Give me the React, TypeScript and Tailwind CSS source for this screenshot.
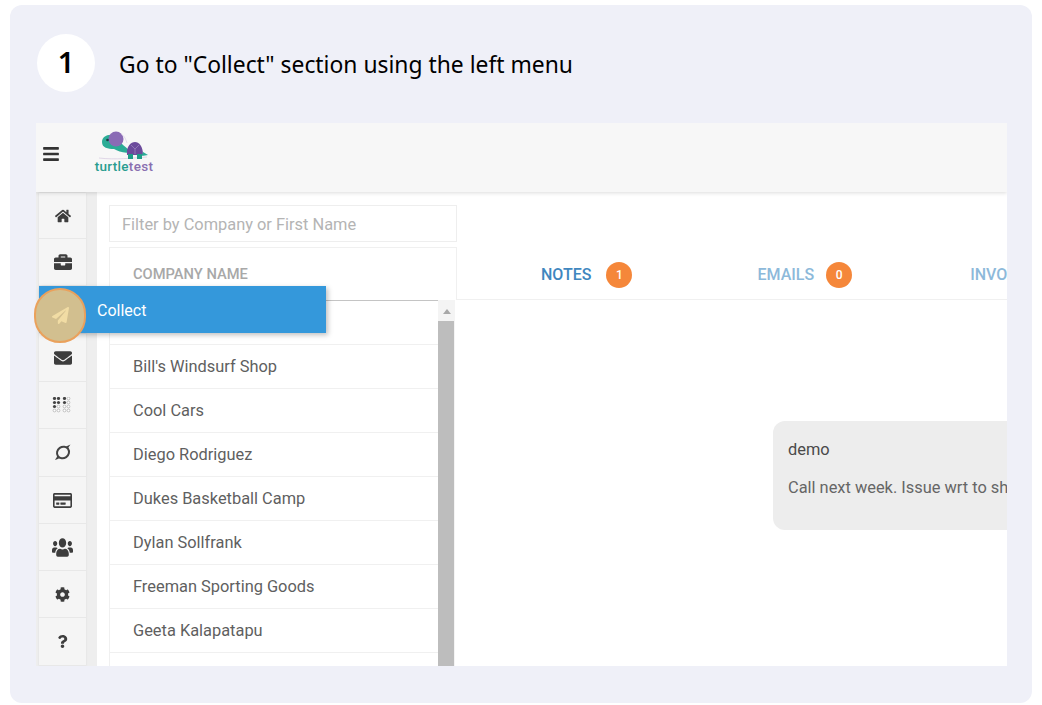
import { FaBars, FaBriefcase, FaCog, FaEnvelope, FaHome, FaPaperPlane, FaQuestion, FaRegCreditCard, FaUsers } from "react-icons/fa";

function DotsIcon() {
  const dark = [[0, 0], [4, 0], [0, 4], [4, 4], [0, 8], [10, 0], [10, 4]];
  const light = [[4, 8], [0, 12], [4, 12], [14, 0], [14, 4], [10, 8], [14, 8], [10, 12], [14, 12]];
  return (
    <svg width="21" height="16" viewBox="-1.5 -1.5 19 16">
      {dark.map(([x, y]) => <circle key={`${x}-${y}`} cx={x} cy={y} r="1.6" fill="#444" />)}
      {light.map(([x, y]) => <circle key={`${x}-${y}`} cx={x} cy={y} r="1.4" fill="#fff" stroke="#aaa" strokeWidth="0.7" />)}
    </svg>
  );
}

function OrbitIcon() {
  return (
    <svg width="19" height="19" viewBox="0 0 19 19" fill="none">
      <ellipse cx="10" cy="9.5" rx="6.2" ry="5.6" stroke="#444" strokeWidth="2" transform="rotate(-35 10 9.5)" />
      <path d="M2 17 C3 15 4 14 4.6 12.4 L6.6 15 C5 16 3.5 16.6 2 17Z M17.5 1.5 C16.5 3 15.6 4 15 5.6 L13 3.6 C14.5 2.8 16 2 17.5 1.5Z" fill="#444" />
    </svg>
  );
}

function TurtleLogo() {
  return (
    <svg width="58" height="29" viewBox="0 0 58 29">
      <path d="M4 27 C20 29 38 27 52 26" stroke="#d5c8e0" strokeWidth="0.7" fill="none" />
      <path d="M7 11 C7 6 12 3 18 4 C23 6 25 11 28 14 C31 16 34 19 35 21 C30 23 23 20 19 18 C13 18 7 17 7 11Z" fill="#2bac96" />
      <circle cx="21" cy="8" r="7.5" fill="#8a6bb5" />
      <circle cx="12.5" cy="9" r="1.3" fill="#1e3a40" />
      <path d="M32 24 C31 15 36 11 40 11 C44 11 48 15 48 24Z" fill="#6c4b9c" />
      <path d="M36 14 L40 18 L44 14 M40 18 V23" stroke="#a08ac2" strokeWidth="0.7" fill="none" />
      <rect x="33" y="23" width="5" height="5" fill="#1f9c88" />
      <rect x="42" y="23" width="5" height="5" fill="#1f9c88" />
      <path d="M48 21 L53 24 L47 25Z" fill="#2bac96" />
      <path d="M26 3 C30 5 31 9 32 12" stroke="#d5c8e0" strokeWidth="0.6" fill="none" />
    </svg>
  );
}

const sideItems = [
  { icon: <FaHome size={16} />, h: "h-[46px]" },
  { icon: <FaBriefcase size={18} />, h: "h-[47px]" },
  { icon: null, h: "h-[48px]" },
  { icon: <FaEnvelope size={18} />, h: "h-[48px]" },
  { icon: <DotsIcon />, h: "h-[47px]" },
  { icon: <OrbitIcon />, h: "h-[48px]" },
  { icon: <FaRegCreditCard size={19} />, h: "h-[47px]" },
  { icon: <FaUsers size={21} className="scale-y-125" />, h: "h-[47px]" },
  { icon: <FaCog size={15} />, h: "h-[47px]" },
  { icon: <FaQuestion size={13} />, h: "h-[48px]" },
];

const rows = ["", "Bill's Windsurf Shop", "Cool Cars", "Diego Rodriguez", "Dukes Basketball Camp", "Dylan Sollfrank", "Freeman Sporting Goods", "Geeta Kalapatapu", "Harry's Hardware"];

export default function App() {
  return (
    <div className="h-[705px] w-[1042px] overflow-hidden bg-white px-[10px] pt-[5px]">
      <div className="h-[698px] w-[1022px] rounded-[12px] bg-[#eff0f8] pl-[26px] pt-[29px] [font-family:'Noto_Sans',sans-serif]">
        <div className="flex h-[58px] items-center">
          <div className="ml-px flex h-[58px] w-[58px] items-center justify-center rounded-full bg-white pb-[2px] text-[29px] font-semibold text-black">1</div>
          <div className="ml-[24px] pt-[4px] text-[22.85px] text-black">Go to "Collect" section using the left menu</div>
        </div>
        <div className="relative mt-[31px] h-[543px] w-[971px] [font-family:Roboto,sans-serif]">
          <div className="h-[543px] w-[971px] overflow-hidden bg-[#eeeeee]">
            <div className="relative flex h-[69px] items-start bg-[#f7f7f7] shadow-[0_1px_4px_rgba(0,0,0,0.14)]">
              <FaBars size={18} className="ml-[6px] mt-[22px] text-[#333]" />
              <div className="ml-[34px] flex w-[60px] flex-col items-center pt-[8px]">
                <TurtleLogo />
                <div className="mt-[-1px] text-[13.5px] font-medium leading-[14px] tracking-[0.3px] text-[#2a9d8f]">turtle<span className="text-[#8a6fb0]">test</span></div>
              </div>
            </div>
            <div className="flex pl-[3px]">
              <div className="mt-px w-[47px] shrink-0 bg-[#f5f5f5] shadow-[0_0_2px_rgba(0,0,0,0.08)]">
                {sideItems.map((item, i) => (
                  <div key={i} className={`flex items-center justify-center border-b border-[#e8e8e8] text-[#3d3d3d] ${item.h}`}>{item.icon}</div>
                ))}
              </div>
              <div className="ml-[11px] h-[474px] flex-1 overflow-hidden bg-white">
                <div className="flex">
                  <div className="ml-[12px] w-[348px] shrink-0 pt-[13px]">
                    <div className="flex h-[37px] items-center border border-[#eeeeee] pl-[12px] pt-[3px] text-[16.4px] text-[#b4b4b4]">Filter by Company or First Name</div>
                    <div className="mt-[5px] flex h-[53px] items-center border border-b-0 border-[#f0f0f0] pl-[23px] text-[14.7px] font-medium text-[#a8a8a8]">COMPANY NAME</div>
                    <div className="flex">
                      <div className="w-[329px] shrink-0 border-l border-t border-l-[#f0f0f0] border-t-[#c4c4c4]">
                        {rows.map((r, i) => (
                          <div key={i} className="flex h-[44px] items-center border-b border-[#f0f0f0] pl-[23px] pt-[2px] text-[16.4px] text-[#5f5f5f]">{r}</div>
                        ))}
                      </div>
                      <div className="w-[17px] shrink-0 bg-[#f4f4f4]">
                        <div className="flex h-[21px] items-center justify-center pt-[2px]">
                          <div className="h-0 w-0 border-x-[4px] border-b-[5px] border-x-transparent border-b-[#a8a8a8]" />
                        </div>
                        <div className="h-[350px] w-[16px] bg-[#bdbdbd]" />
                      </div>
                    </div>
                  </div>
                  <div className="min-w-0 flex-1">
                    <div className="mt-[55px] flex h-[53px] items-center border-b border-[#f0f0f0] pt-[3px] whitespace-nowrap text-[16px] font-medium">
                      <span className="ml-[84px] shrink-0 text-[#3f87bf]">NOTES</span>
                      <span className="ml-[15px] flex h-[26px] w-[26px] shrink-0 items-center justify-center rounded-full bg-[#f5873a] text-[12px] text-white">1</span>
                      <span className="ml-[125px] shrink-0 text-[#8db9da]">EMAILS</span>
                      <span className="ml-[12px] flex h-[26px] w-[26px] shrink-0 items-center justify-center rounded-full bg-[#f5873a] text-[12px] text-white">0</span>
                      <span className="ml-[118px] shrink-0 text-[#8db9da]">INVOICES</span>
                    </div>
                    <div className="ml-[316px] mt-[121px] h-[109px] w-[400px] rounded-[12px] bg-[#ededed] pl-[15px] pt-[19px] text-[16.4px] leading-[20px] whitespace-nowrap">
                      <div className="text-[#4a4a4a]">demo</div>
                      <div className="mt-[18px] text-[#666]">Call next week. Issue wrt to shipping</div>
                    </div>
                  </div>
                </div>
              </div>
            </div>
          </div>
          <div className="absolute left-[3px] top-[163px] flex h-[47px] w-[287px] items-center bg-[#3498db] pl-[58px] pt-[3px] text-[16px] text-white shadow-[2px_2px_5px_rgba(0,0,0,0.25)]">Collect</div>
          <div className="absolute left-[-2px] top-[165px] flex h-[55px] w-[52px] items-center justify-center rounded-full border-2 border-[#eaa15c] bg-[#d2bf8f]">
            <FaPaperPlane size={17} className="text-[#f1dca4]" />
          </div>
        </div>
      </div>
    </div>
  );
}
